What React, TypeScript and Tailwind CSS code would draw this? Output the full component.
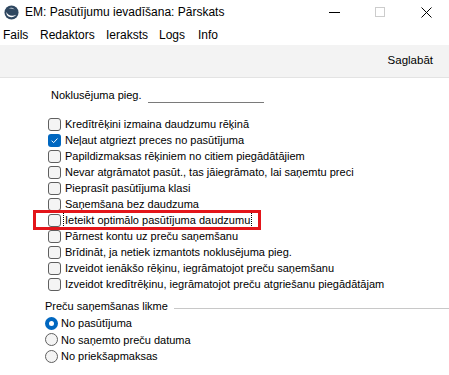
import React from 'react';

const checks = [
  { label: 'Kredītrēķini izmaina daudzumu rēķinā', checked: false },
  { label: 'Neļaut atgriezt preces no pasūtījuma', checked: true },
  { label: 'Papildizmaksas rēķiniem no citiem piegādātājiem', checked: false },
  { label: 'Nevar atgrāmatot pasūt., tas jāiegrāmato, lai saņemtu preci', checked: false },
  { label: 'Pieprasīt pasūtījuma klasi', checked: false },
  { label: 'Saņemšana bez daudzuma', checked: false },
  { label: 'Ieteikt optimālo pasūtījuma daudzumu', checked: false, focus: true },
  { label: 'Pārnest kontu uz preču saņemšanu', checked: false },
  { label: 'Brīdināt, ja netiek izmantots noklusējuma pieg.', checked: false },
  { label: 'Izveidot ienākšo rēķinu, iegrāmatojot preču saņemšanu', checked: false },
  { label: 'Izveidot kredītrēķinu, iegrāmatojot preču atgriešanu piegādātājam', checked: false },
];

const radios = [
  { label: 'No pasūtījuma', checked: true },
  { label: 'No saņemto preču datuma', checked: false },
  { label: 'No priekšapmaksas', checked: false },
];

function Logo() {
  return (
    <svg width="15" height="15" viewBox="0 0 16 16">
      <circle cx="8" cy="8" r="7.5" fill="#2f4760" />
      <path d="M2.5 7.5c1.5 3.5 5.5 5 10.5 3-2 3-7 3.6-9.4.8-.8-1-1.1-2.6-1.1-3.8z" fill="#fff" />
      <path d="M5 3.5c2-1.2 5-.6 6.3 1.3-1.8-.8-4-.9-6.3-1.3z" fill="#c9d3dd" />
    </svg>
  );
}

function Checkbox({ checked }: { checked: boolean }) {
  if (checked) {
    return (
      <div className="w-[13px] h-[13px] rounded-[3px] bg-[#0067c0] flex items-center justify-center shrink-0">
        <svg width="9" height="9" viewBox="0 0 10 10">
          <path d="M1.8 5.2l2.2 2.2 4.3-4.6" fill="none" stroke="#fff" strokeWidth="1.1" />
        </svg>
      </div>
    );
  }
  return <div className="w-[13px] h-[13px] rounded-[3px] border border-[#5f5f5f] bg-[#f4f4f4] shrink-0" />;
}

function Radio({ checked }: { checked: boolean }) {
  if (checked) {
    return (
      <div className="w-[13px] h-[13px] rounded-full bg-[#0067c0] flex items-center justify-center shrink-0">
        <div className="w-[5px] h-[5px] rounded-full bg-white" />
      </div>
    );
  }
  return <div className="w-[13px] h-[13px] rounded-full border border-[#5f5f5f] bg-[#f4f4f4] shrink-0" />;
}

export default function App() {
  return (
    <div
      className="w-[449px] h-[375px] bg-white overflow-hidden relative text-[11px] text-black"
      style={{ fontFamily: '"Segoe UI", "Liberation Sans", Arial, sans-serif' }}
    >
      {/* Title bar */}
      <div className="h-[24px] flex items-center">
        <div className="pl-[4px] pr-[6px] flex items-center">
          <Logo />
        </div>
        <span className="text-[12px]">EM: Pasūtījumu ievadīšana: Pārskats</span>
        <div className="ml-auto flex items-center h-full">
          <div className="w-[46px] flex justify-center">
            <div className="w-[11px] h-px bg-black" />
          </div>
          <div className="w-[46px] flex justify-center">
            <div className="w-[10px] h-[10px] border border-[#cccccc]" />
          </div>
          <div className="w-[46px] flex justify-center">
            <svg width="11" height="11" viewBox="0 0 11 11">
              <path d="M.5.5l10 10M10.5.5l-10 10" stroke="#000" strokeWidth="1" />
            </svg>
          </div>
        </div>
      </div>

      {/* Menu */}
      <div className="h-[21px] flex items-center pl-[3px] text-[12px]">
        <span className="w-[37px]">Fails</span>
        <span className="w-[66px]">Redaktors</span>
        <span className="w-[53px]">Ieraksts</span>
        <span className="w-[39px]">Logs</span>
        <span>Info</span>
      </div>

      {/* Toolbar */}
      <div className="h-[33px] bg-[#f3f3f3] border-b border-[#e3e3e3] flex items-center justify-end pr-[16px]">
        <span className="text-[11.5px]">Saglabāt</span>
      </div>

      {/* Content */}
      <div className="pt-[9px]">
        <div className="h-[16px] flex items-center pl-[51px]">
          <span className="w-[97px] whitespace-nowrap">Noklusējuma pieg.</span>
          <div className="w-[116px] h-[16px] border-b border-[#7a7a7a]" />
        </div>

        <div className="mt-[13px] pl-[48px] flex flex-col">
          {checks.map((c) => (
            <div key={c.label} className="h-[16px] flex items-center gap-[2px]">
              <Checkbox checked={c.checked} />
              <span
                className={`leading-[14px] whitespace-nowrap ${
                  c.focus ? 'border border-dotted border-black px-px' : 'px-[2px]'
                }`}
              >
                {c.label}
              </span>
            </div>
          ))}
        </div>

        <div className="mt-[6px] pl-[45px] h-[16px] flex items-center gap-[6px]">
          <span className="whitespace-nowrap">Preču saņemšanas likme</span>
          <div className="flex-1 h-px bg-[#c8c8c8] mt-[4px]" />
        </div>
        <div className="mt-px pl-[45px] flex flex-col">
          {radios.map((r) => (
            <div key={r.label} className="h-[16.5px] flex items-center gap-[3px]">
              <Radio checked={r.checked} />
              <span className="whitespace-nowrap">{r.label}</span>
            </div>
          ))}
        </div>
      </div>

      {/* Annotation highlight */}
      <div className="absolute left-[33px] top-[210px] w-[228px] h-[20px] border-[3px] border-[#e3151a]" />
    </div>
  );
}
